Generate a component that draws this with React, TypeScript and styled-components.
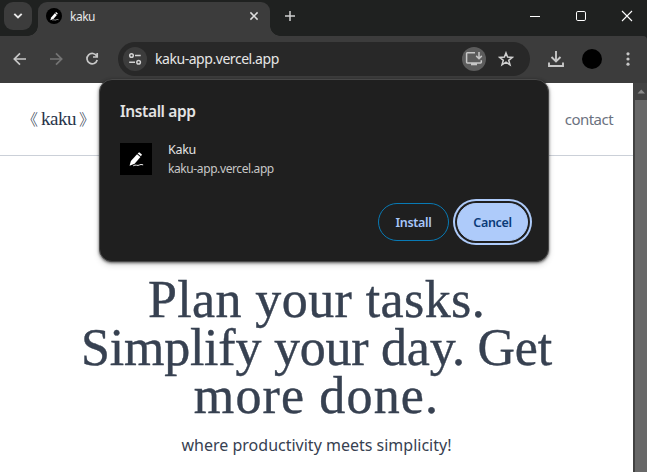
import React from "react";
import styled, { createGlobalStyle } from "styled-components";

const GlobalStyle = createGlobalStyle`
  * { box-sizing: border-box; }
  body { margin: 0; overflow: hidden; background: #fff; }
  button { padding: 0; border: 0; background: none; font: inherit; color: inherit; }
  svg { display: block; flex: none; }
`;

const Window = styled.div`
  position: relative;
  width: 647px;
  height: 472px;
  display: flex;
  flex-direction: column;
  overflow: hidden;
  background: #1f2120;
  font-family: "Noto Sans", sans-serif;
`;

const TabStrip = styled.div`
  height: 36px;
  flex: none;
  display: flex;
  align-items: flex-start;
  padding-left: 4px;
  background: #1f2120;
`;

const TabSearch = styled.button`
  && {
    width: 28px;
    height: 28px;
    margin-top: 2px;
    border-radius: 9px;
    background: #3c3c3c;
    display: grid;
    place-items: center;
  }
`;

const Tab = styled.div`
  position: relative;
  width: 232px;
  height: 34px;
  margin: 2px 0 0 6px;
  padding: 0 11px 6px 8px;
  border-radius: 9px 9px 0 0;
  background: #3c3c3c;
  display: flex;
  align-items: center;
  color: #e6e6e6;
  font-size: 12px;

  &::before,
  &::after {
    content: "";
    position: absolute;
    bottom: 0;
    width: 10px;
    height: 10px;
  }
  &::before {
    left: -10px;
    background: radial-gradient(circle at 0 0, transparent 9.5px, #3c3c3c 10px);
  }
  &::after {
    right: -10px;
    background: radial-gradient(circle at 100% 0, transparent 9.5px, #3c3c3c 10px);
  }
`;

const Favicon = styled.span`
  width: 16px;
  height: 16px;
  border-radius: 50%;
  background: #000;
  display: grid;
  place-items: center;
  margin-right: 8px;
`;

const TabTitle = styled.span`
  flex: 1;
  letter-spacing: -0.5px;
  line-height: 16px;
  padding-top: 1px;
`;

const NewTab = styled.button`
  margin: 10px 0 0 14px;
`;

const WindowControls = styled.div`
  margin-left: auto;
  padding: 10px 14px 0 0;
  display: flex;
  gap: 34px;
`;

const Toolbar = styled.div`
  height: 47px;
  flex: none;
  display: flex;
  align-items: center;
  padding: 0 12px 1px 12px;
  background: #3c3c3c;
  border-top-right-radius: 4px;
`;

const NavGroup = styled.div`
  display: flex;
  gap: 20px;
  width: 106px;
`;

const Omnibox = styled.div`
  width: 412px;
  height: 34px;
  border-radius: 17px;
  background: #282828;
  display: flex;
  align-items: center;
  padding: 0 16px 0 5px;
`;

const RoundChip = styled.span<{ $tone: string }>`
  width: 24px;
  height: 24px;
  flex: none;
  border-radius: 50%;
  background: ${(p) => p.$tone};
  display: grid;
  place-items: center;
`;

const Url = styled.span`
  flex: 1;
  padding-left: 8px;
  color: #e6e6e6;
  font-size: 14px;
  line-height: 20px;
  letter-spacing: -0.45px;
`;

const StarSlot = styled.span`
  margin-left: 12px;
`;

const ToolbarEnd = styled.div`
  flex: 1;
  display: flex;
  align-items: center;
  padding-left: 17px;
`;

const Avatar = styled.span`
  width: 20px;
  height: 20px;
  border-radius: 50%;
  background: #000;
  margin: 0 19px 0 17px;
`;

const Viewport = styled.div`
  flex: 1;
  display: flex;
`;

const Page = styled.main`
  flex: 1;
  background: #fff;
  color: #374151;
`;

const SiteHeader = styled.header`
  height: 73px;
  display: flex;
  align-items: center;
  justify-content: space-between;
  padding: 0 20px 0 22px;
  border-bottom: 1px solid #cbd0d8;
`;

const Brand = styled.div`
  display: flex;
  align-items: center;
  gap: 3px;
  color: #28344a;
`;

const BrandName = styled.span`
  font-family: "Liberation Serif", serif;
  font-size: 19px;
  line-height: 24px;
  letter-spacing: -0.5px;
`;

const Bracket = styled.span`
  font-family: "Noto Sans CJK SC", sans-serif;
  font-weight: 300;
  font-size: 16px;
  line-height: 24px;
  padding-bottom: 2px;
`;

const ContactLink = styled.a`
  color: #6b7280;
  font-size: 15px;
  line-height: 20px;
  letter-spacing: -0.55px;
`;

const Hero = styled.section`
  padding-top: 120px;
  text-align: center;
`;

const Headline = styled.h1`
  margin: 0;
  font-family: "Liberation Serif", serif;
  font-size: 52px;
  font-weight: 400;
  line-height: 48px;
  -webkit-text-stroke: 0.4px currentColor;
`;

const Line = styled.span<{ $track: number }>`
  display: block;
  white-space: nowrap;
  letter-spacing: ${(p) => p.$track}px;
`;

const Tagline = styled.p`
  margin: 13px 0 0;
  font-size: 16px;
  line-height: 24px;
`;

const Scrollbar = styled.div`
  width: 14px;
  padding: 5px 0 0 2px;
  background: #424242;
  display: flex;
  flex-direction: column;
`;

const ScrollThumb = styled.div`
  flex: 1;
  margin-top: 6px;
  background: #686868;
`;

const Dialog = styled.div`
  position: absolute;
  left: 99px;
  top: 79px;
  width: 450px;
  height: 183px;
  padding: 20px;
  border: 1px solid #484848;
  border-radius: 13px;
  background: #1f1f1f;
  box-shadow: 0 1px 3px rgba(0, 0, 0, 0.6), 0 3px 6px rgba(0, 0, 0, 0.15);
  color: #e3e3e3;
  display: flex;
  flex-direction: column;
`;

const DialogTitle = styled.h2`
  margin: 0;
  font-size: 15.5px;
  font-weight: 600;
  line-height: 22px;
  letter-spacing: -0.4px;
`;

const AppRow = styled.div`
  display: flex;
  gap: 16px;
  margin-top: 18px;
  align-items: center;
`;

const AppIcon = styled.span`
  width: 32px;
  height: 32px;
  background: #000;
  display: grid;
  place-items: center;
`;

const AppMeta = styled.div`
  display: flex;
  flex-direction: column;
`;

const AppName = styled.span`
  font-size: 12.5px;
  line-height: 20px;
  letter-spacing: -0.3px;
`;

const AppHost = styled.span`
  font-size: 12px;
  line-height: 18px;
  color: #c7c7c7;
  letter-spacing: -0.4px;
`;

const Actions = styled.div`
  display: flex;
  justify-content: flex-end;
  gap: 8px;
  margin-top: auto;
`;

const ActionButton = styled.button<{ $primary?: boolean }>`
  && {
    width: 71px;
    height: 38px;
    border-radius: 19px;
    font-size: 12.5px;
    font-weight: 600;
    letter-spacing: -0.3px;
    border: 1px solid ${(p) => (p.$primary ? "#aecbfa" : "#087ab5")};
    background: ${(p) => (p.$primary ? "#aecbfa" : "transparent")};
    color: ${(p) => (p.$primary ? "#0b3b78" : "#a8c7fa")};
    box-shadow: ${(p) => (p.$primary ? "0 0 0 2px #1f1f1f, 0 0 0 4px #aecbfa" : "none")};
  }
`;

const PenMark = ({ size }: { size: number }) => (
  <svg width={size} height={size} viewBox="0 0 16 16">
    <path d="M.6 14.6 2 9.6 8.6 2.4 12.2 5.2 6 12.4Z" fill="#fff" />
    <path d="m9.2 1.7 1.6-1.5 3 2.4-1 1.8Z" fill="#fff" />
    <path d="M4.5 14.7q2-1.2 3.6-.6t3-.3 4-.1" fill="none" stroke="#fff" strokeWidth="1" />
  </svg>
);

const BackArrow = ({ color, flip }: { color: string; flip?: boolean }) => (
  <svg width="16" height="16" viewBox="0 0 16 16" fill="none" stroke={color} strokeWidth="1.7">
    <path d={flip ? "M2 8h11.5M8 2.3 13.7 8 8 13.7" : "M14 8H2.5M8 2.3 2.3 8 8 13.7"} />
  </svg>
);

export default function App() {
  return (
    <Window>
      <GlobalStyle />
      <TabStrip>
        <TabSearch aria-label="Search tabs">
          <svg width="10" height="8" viewBox="0 0 10 8" fill="none" stroke="#e8e8e8" strokeWidth="1.9">
            <path d="m1.3 1.8 3.7 3.7 3.7-3.7" />
          </svg>
        </TabSearch>
        <Tab>
          <Favicon><PenMark size={9} /></Favicon>
          <TabTitle>kaku</TabTitle>
          <svg width="10" height="10" viewBox="0 0 10 10" stroke="#dedede" strokeWidth="1.5">
            <path d="m1.4 1.4 7.2 7.2M8.6 1.4 1.4 8.6" />
          </svg>
        </Tab>
        <NewTab aria-label="New tab">
          <svg width="12" height="12" viewBox="0 0 12 12" stroke="#d0d0d0" strokeWidth="1.5">
            <path d="M6 1v10M1 6h10" />
          </svg>
        </NewTab>
        <WindowControls>
          <svg width="12" height="12" stroke="#fff"><path d="M1 6.5h10" /></svg>
          <svg width="12" height="12" fill="none" stroke="#fff"><rect x="1.5" y="1.5" width="9" height="9" rx="1.3" /></svg>
          <svg width="12" height="12" stroke="#fff" strokeWidth="1.1"><path d="m1 1 10 10M11 1 1 11" /></svg>
        </WindowControls>
      </TabStrip>
      <Toolbar>
        <NavGroup>
          <BackArrow color="#c7c7c7" />
          <BackArrow color="#747474" flip />
          <svg width="16" height="16" viewBox="0 0 16 16" fill="none" stroke="#c7c7c7" strokeWidth="1.7">
            <path d="M12.8 5.2A5.2 5.2 0 1 0 13.2 9M13.2 2v4H9" />
          </svg>
        </NavGroup>
        <Omnibox>
          <RoundChip $tone="#3c3c3c">
            <svg width="14" height="14" viewBox="0 0 14 14" fill="none" stroke="#d3d3d3" strokeWidth="1.5">
              <circle cx="3.5" cy="3.5" r="1.8" />
              <path d="M7 3.5h5.7M1.2 10.2H7" />
              <circle cx="10.6" cy="10.2" r="1.8" />
            </svg>
          </RoundChip>
          <Url>kaku-app.vercel.app</Url>
          <RoundChip $tone="#5c5c5c">
            <svg width="18" height="16" viewBox="0 0 18 16" fill="none" stroke="#c7c7c7" strokeWidth="1.5">
              <path d="M10 1.8H2.3q-.7 0-.7.7v8.7q0 .7.7.7h13.3q.7 0 .7-.7V9.3M14 1v6.4M11.2 4.9 14 7.7l2.8-2.8" />
              <path d="M6 12v2.3h6V12" fill="#c7c7c7" stroke="none" />
            </svg>
          </RoundChip>
          <StarSlot>
            <svg width="16" height="16" viewBox="0 0 16 16" fill="none" stroke="#d0d0d0" strokeWidth="1.5">
              <path d="m8 1.9 1.6 4.2 4.7.3-3.6 2.9 1.3 4.5L8 11.2l-4 2.6 1.3-4.5-3.6-2.9 4.7-.3Z" />
            </svg>
          </StarSlot>
        </Omnibox>
        <ToolbarEnd>
          <svg width="18" height="18" viewBox="0 0 18 18" fill="none" stroke="#c7c7c7" strokeWidth="1.9">
            <path d="M9 1v10M4.5 7 9 11.5 13.5 7M2 12.5V16h14v-3.5" />
          </svg>
          <Avatar />
          <svg width="14" height="16" viewBox="0 0 14 16" fill="#c7c7c7">
            <circle cx="7" cy="2.8" r="1.6" /><circle cx="7" cy="8" r="1.6" /><circle cx="7" cy="13.2" r="1.6" />
          </svg>
        </ToolbarEnd>
      </Toolbar>
      <Viewport>
        <Page>
          <SiteHeader>
            <Brand>
              <Bracket>《</Bracket>
              <BrandName>kaku</BrandName>
              <Bracket>》</Bracket>
            </Brand>
            <ContactLink>contact</ContactLink>
          </SiteHeader>
          <Hero>
            <Headline>
              <Line $track={0.4}>Plan your tasks.</Line>
              <Line $track={-0.24}>Simplify your day. Get</Line>
              <Line $track={1.15}>more done.</Line>
            </Headline>
            <Tagline>where productivity meets simplicity!</Tagline>
          </Hero>
        </Page>
        <Scrollbar>
          <svg width="12" height="6" viewBox="0 0 12 6"><path d="M2.5 5.5 6.3 1.5 10 5.5Z" fill="#8b8b8b" /></svg>
          <ScrollThumb />
        </Scrollbar>
      </Viewport>
      <Dialog role="dialog" aria-label="Install app">
        <DialogTitle>Install app</DialogTitle>
        <AppRow>
          <AppIcon><PenMark size={15} /></AppIcon>
          <AppMeta>
            <AppName>Kaku</AppName>
            <AppHost>kaku-app.vercel.app</AppHost>
          </AppMeta>
        </AppRow>
        <Actions>
          <ActionButton>Install</ActionButton>
          <ActionButton $primary>Cancel</ActionButton>
        </Actions>
      </Dialog>
    </Window>
  );
}
